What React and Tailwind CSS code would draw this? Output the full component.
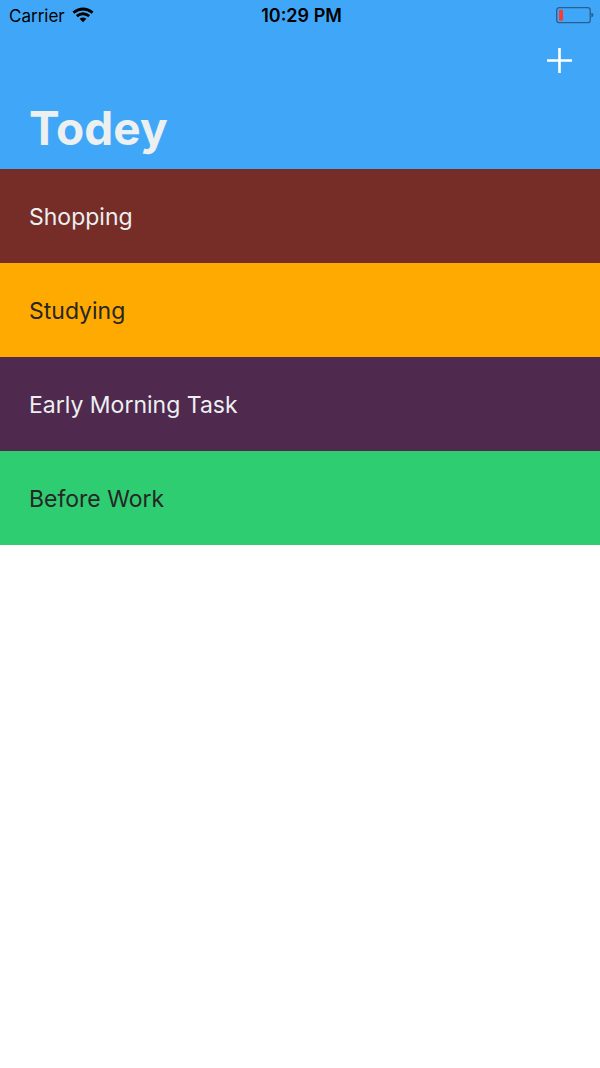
const categories = [
  { name: "Shopping", color: "bg-[#762d28] text-[#ecf0f1]" },
  { name: "Studying", color: "bg-[#ffaa00] text-[#262626]" },
  { name: "Early Morning Task", color: "bg-[#50294f] text-[#ecf0f1]" },
  { name: "Before Work", color: "bg-[#2fcd71] text-[#262626]" },
];

function WifiIcon() {
  return (
    <svg className="h-4 w-[22px]" viewBox="0 0 22 16" fill="none" stroke="#000" strokeWidth="2.8" aria-hidden="true">
      <path d="M1.4 5.6Q11 -1.7 20.6 5.6" />
      <path d="M4.8 9.2Q11 4.4 17.2 9.2" />
      <path d="M7.6 11.8Q11 9 14.4 11.8L11 15.2Z" fill="#000" stroke="none" />
    </svg>
  );
}

function BatteryIcon() {
  return (
    <svg className="h-[17px] w-[38px]" viewBox="0 0 38 17" aria-hidden="true">
      <rect x="0.7" y="0.7" width="33.5" height="15" rx="2.5" fill="none" stroke="#265f92" strokeWidth="1.3" />
      <rect x="3" y="2.7" width="4" height="11" rx="1" fill="#fb3c2c" />
      <path d="M35.3 5.8Q37.5 6.1 37.5 8.1T35.3 10.4Z" fill="#265f92" />
    </svg>
  );
}

function StatusBar() {
  return (
    <div className="grid h-[30px] grid-cols-[1fr_auto_1fr] items-center pr-1.5 pl-[9px] text-[17px] leading-6 text-black">
      <div className="flex items-center gap-[7px]">
        <span className="pt-0.5">Carrier</span>
        <WifiIcon />
      </div>
      <span className="pt-0.5 text-[18px] font-semibold">10:29 PM</span>
      <div className="flex justify-end">
        <BatteryIcon />
      </div>
    </div>
  );
}

export default function App() {
  return (
    <div className="min-h-screen bg-white font-['Inter',sans-serif]">
      <header className="bg-[#40a7f8]">
        <StatusBar />
        <div className="flex h-[61px] items-center justify-end px-6">
          <button type="button" aria-label="Add category" className="p-1">
            <svg className="h-[25px] w-[25px]" viewBox="0 0 25 25" stroke="#fff" strokeWidth="2.6" aria-hidden="true">
              <path d="M12.5 0V25M0 12.5H25" />
            </svg>
          </button>
        </div>
        <h1 className="h-[78px] px-[29px] pt-2 text-[46px] leading-[58px] font-bold text-[#ecf0f1]">Todey</h1>
      </header>
      <ul>
        {categories.map((category) => (
          <li key={category.name}>
            <a href="#" className={`flex h-[94px] items-center px-[29px] pt-0.5 text-[23px] ${category.color}`}>
              {category.name}
            </a>
          </li>
        ))}
      </ul>
    </div>
  );
}
